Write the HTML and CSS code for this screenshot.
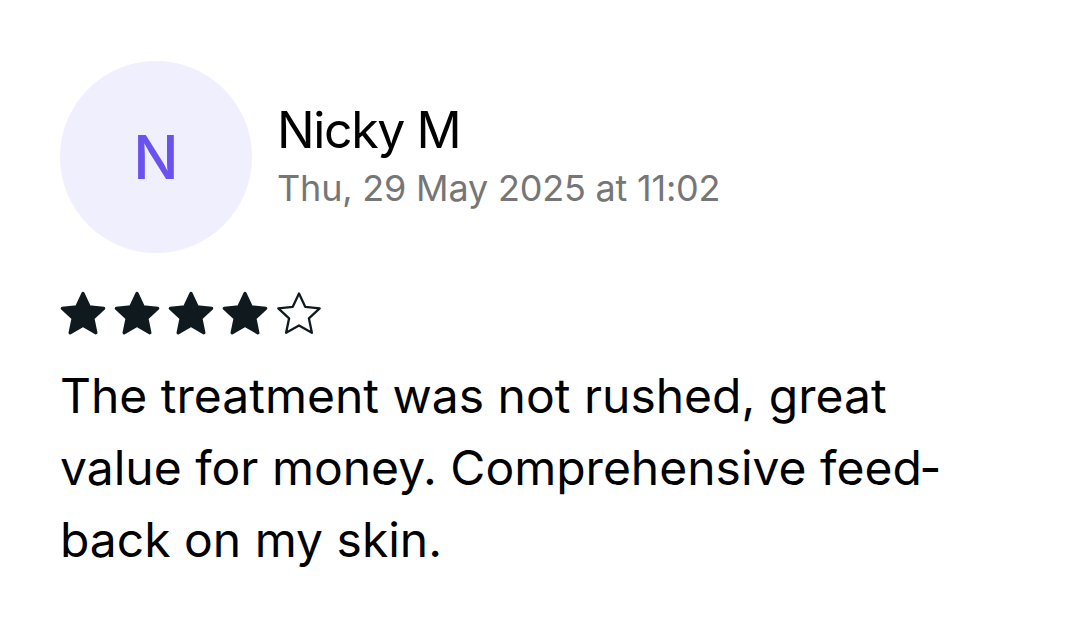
FILE: index.html
```html
<!DOCTYPE html>
<html lang="en">
<head>
    <meta charset="UTF-8">
    <meta name="viewport" content="width=device-width, initial-scale=1.0">
    <title>Review</title>
    <link rel="stylesheet" href="styles.css">
</head>
<body>
    <div class="review">
        <div class="review-head">
            <div class="avatar">N</div>
            <div class="author">
                <p class="name">Nicky M</p>
                <p class="date">Thu, 29 May 2025 at 11:02</p>
            </div>
        </div>
        <div class="stars">
            <svg class="star full" viewBox="2 1.8 20 19"><path d="M12 2.8l2.7 5.8 6.3.7-4.7 4.3 1.3 6.3L12 16.7l-5.6 3.2 1.3-6.3L3 9.3l6.3-.7z"/></svg>
            <svg class="star full" viewBox="2 1.8 20 19"><path d="M12 2.8l2.7 5.8 6.3.7-4.7 4.3 1.3 6.3L12 16.7l-5.6 3.2 1.3-6.3L3 9.3l6.3-.7z"/></svg>
            <svg class="star full" viewBox="2 1.8 20 19"><path d="M12 2.8l2.7 5.8 6.3.7-4.7 4.3 1.3 6.3L12 16.7l-5.6 3.2 1.3-6.3L3 9.3l6.3-.7z"/></svg>
            <svg class="star full" viewBox="2 1.8 20 19"><path d="M12 2.8l2.7 5.8 6.3.7-4.7 4.3 1.3 6.3L12 16.7l-5.6 3.2 1.3-6.3L3 9.3l6.3-.7z"/></svg>
            <svg class="star empty" viewBox="2 1.8 20 19"><path d="M12 2.8l2.7 5.8 6.3.7-4.7 4.3 1.3 6.3L12 16.7l-5.6 3.2 1.3-6.3L3 9.3l6.3-.7z"/></svg>
        </div>
        <p class="text">The treatment was not rushed, great value for money. Comprehensive feed&shy;back on my skin.</p>
    </div>
</body>
</html>
```

FILE: styles.css
```css
*{
    margin: 0;
    padding: 0;
    box-sizing: border-box;
    font-family: Inter, Roboto, sans-serif;
}
body{
    background: #fff;
    color: #000;
}
.review{
    padding: 61px 60px 0;
}
.review-head{
    display: flex;
    align-items: center;
    gap: 25px;
}
.avatar{
    width: 192px;
    height: 192px;
    border-radius: 50%;
    background: #f0effd;
    color: #6b52ee;
    font-size: 60px;
    font-weight: 500;
    display: flex;
    align-items: center;
    justify-content: center;
}
.author{
    padding-top: 2px;
}
.author .name{
    font-size: 50px;
    line-height: 60px;
    letter-spacing: -1.4px;
}
.author .date{
    font-size: 36px;
    line-height: 56px;
    color: #767676;
    letter-spacing: -0.2px;
}
.stars{
    display: flex;
    gap: 8px;
    margin-top: 38px;
}
.star{
    width: 46px;
    height: 44px;
}
.star path{
    stroke-linejoin: round;
    stroke: #101a1e;
}
.star.full path{
    fill: #101a1e;
    stroke-width: 1.4;
}
.star.empty path{
    fill: none;
    stroke-width: 1;
}
.text{
    margin-top: 25px;
    width: 900px;
    font-size: 48px;
    line-height: 72px;
    hyphens: manual;
}
```
